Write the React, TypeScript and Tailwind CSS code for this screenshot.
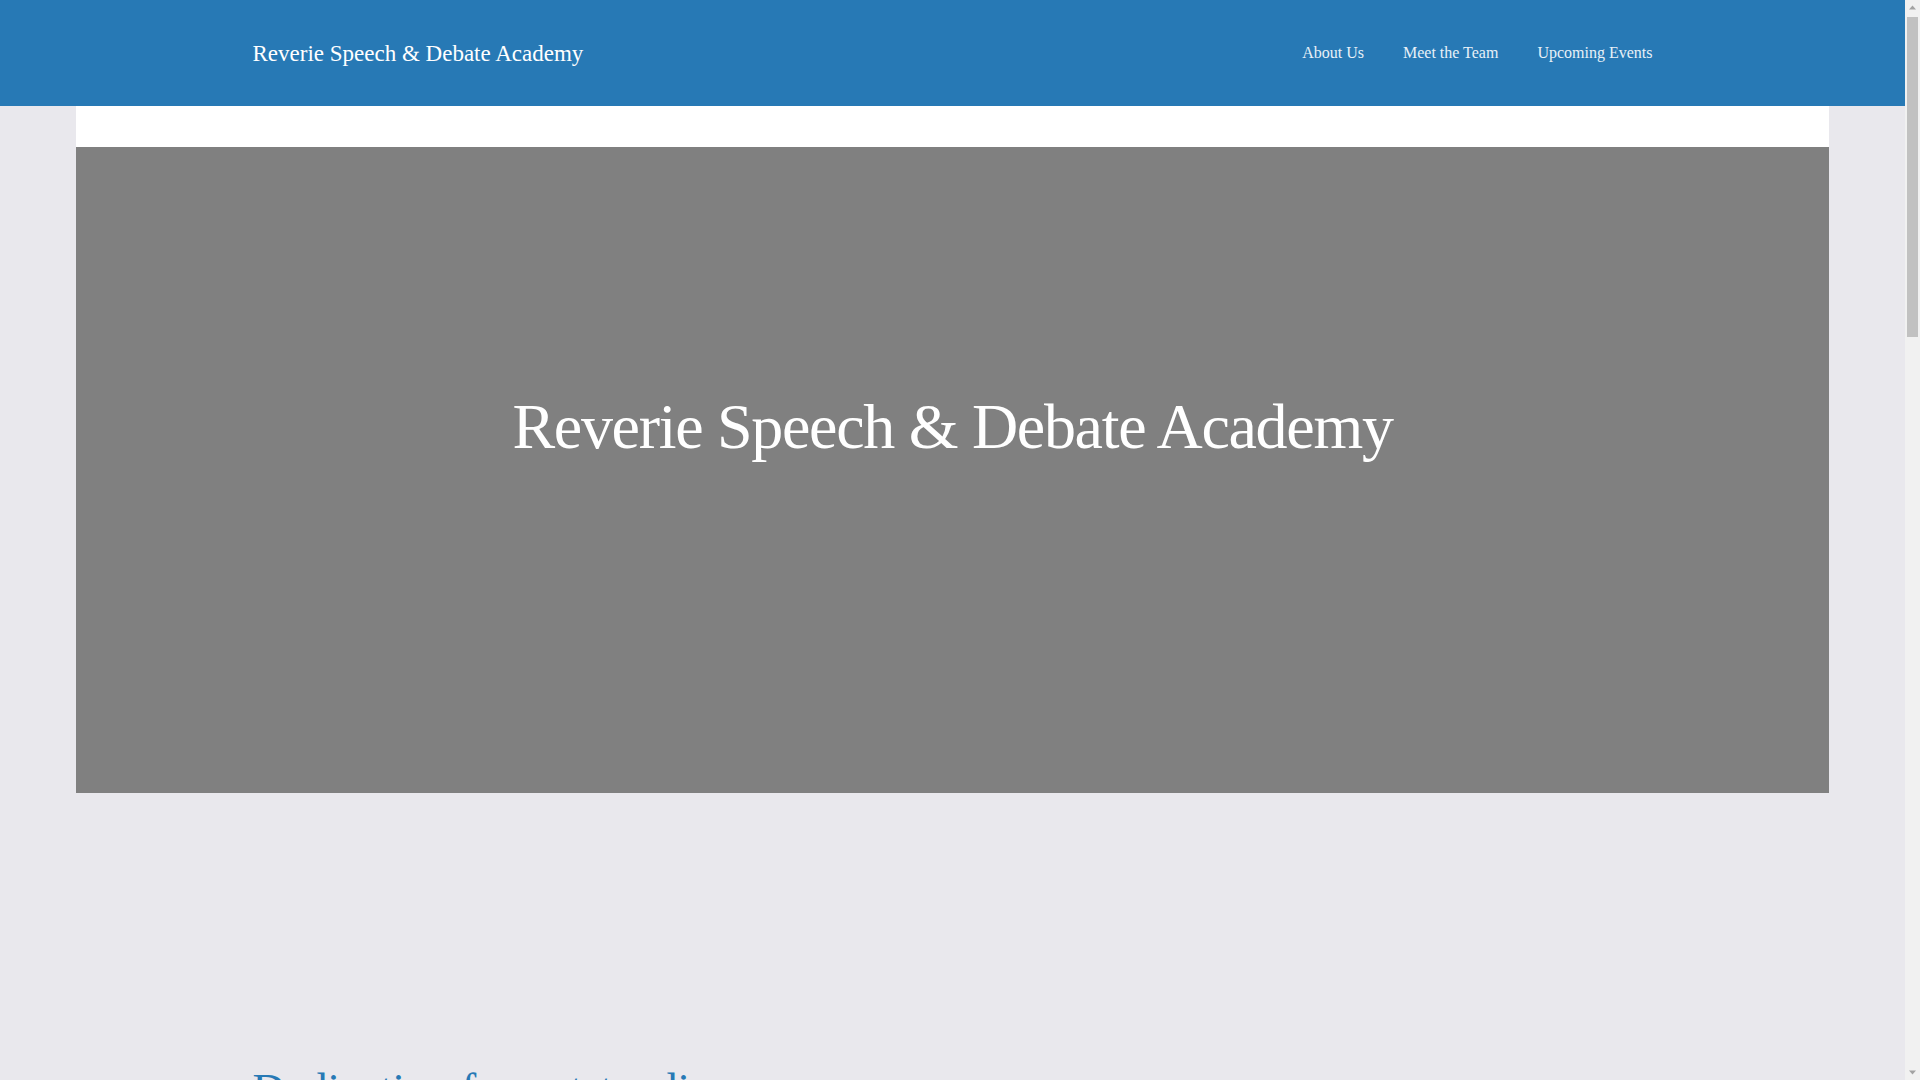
import React from 'react';

const navLinks = ['About Us', 'Meet the Team', 'Upcoming Events'];

function Header() {
  return (
    <header className="bg-[#2779b5] h-[106px]">
      <div className="max-w-[1400px] mx-auto h-full flex items-center justify-between">
        <a href="#" className="text-white text-[23px] leading-none">
          Reverie Speech &amp; Debate Academy
        </a>
        <nav className="flex items-center gap-[39px]">
          {navLinks.map((link) => (
            <a key={link} href="#" className="text-[#e8f1f8] text-[16px]">
              {link}
            </a>
          ))}
        </nav>
      </div>
    </header>
  );
}

function Hero() {
  return (
    <div className="w-[92%] mx-auto bg-white pt-[41px]">
      <div className="bg-[#808080] h-[646px] flex flex-col items-center pt-[243px]">
        <h1 className="text-white text-[64px] leading-[1.15] tracking-[-1.3px]">
          Reverie Speech &amp; Debate Academy
        </h1>
      </div>
    </div>
  );
}

// the browser's own scrollbar, which the headless shot does not paint
function Scrollbar() {
  return (
    <div className="fixed top-0 right-0 h-screen w-[15px] bg-[#f1f1f1] flex flex-col items-center">
      <svg width="15" height="15" viewBox="0 0 15 15" className="shrink-0">
        <path d="M4 9.5h7L7.5 5.5z" fill="#a3a3a3" />
      </svg>
      <div className="w-[11px] h-[320px] mt-[2px] bg-[#c1c1c1]" />
      <div className="flex-1" />
      <svg width="15" height="15" viewBox="0 0 15 15" className="shrink-0">
        <path d="M4 5.5h7L7.5 9.5z" fill="#a3a3a3" />
      </svg>
    </div>
  );
}

export default function App() {
  return (
    <div className="bg-[#e9e8ed] font-['Liberation_Serif',serif]">
      <div className="mr-[15px] min-h-[3470px]">
        <Header />
        <Hero />

        {/* content below the fold */}
        <section className="max-w-[1400px] mx-auto pt-[271px] pb-24">
          <h2 className="text-[#2779b5] text-[45px] leading-[1.15]">
            Dedication for outstanding success
          </h2>
          <div className="mt-8 flex flex-col gap-6 text-[18px] leading-relaxed text-[#333]">
            <p>
              At Reverie Speech &amp; Debate Academy, students build the confidence to speak clearly,
              think critically and argue with care. Our coaches work with every student to shape
              ideas into persuasive cases.
            </p>
            <p>
              From first-time speakers to national competitors, we offer classes, camps and private
              coaching in public forum, Lincoln-Douglas, policy and individual events.
            </p>
          </div>
        </section>

        <section className="max-w-[1400px] mx-auto py-24">
          <h2 className="text-[#2779b5] text-[45px] leading-[1.15]">Our Programs</h2>
          <div className="mt-10 grid grid-cols-3 gap-8">
            {['Public Forum', 'Lincoln-Douglas', 'Speech Events'].map((p) => (
              <div key={p} className="bg-white p-8 h-[320px]">
                <h3 className="text-[#2779b5] text-[28px]">{p}</h3>
                <p className="mt-4 text-[17px] leading-relaxed text-[#444]">
                  Small-group classes and tournament preparation led by experienced coaches.
                </p>
              </div>
            ))}
          </div>
        </section>
      </div>
      <Scrollbar />
    </div>
  );
}
